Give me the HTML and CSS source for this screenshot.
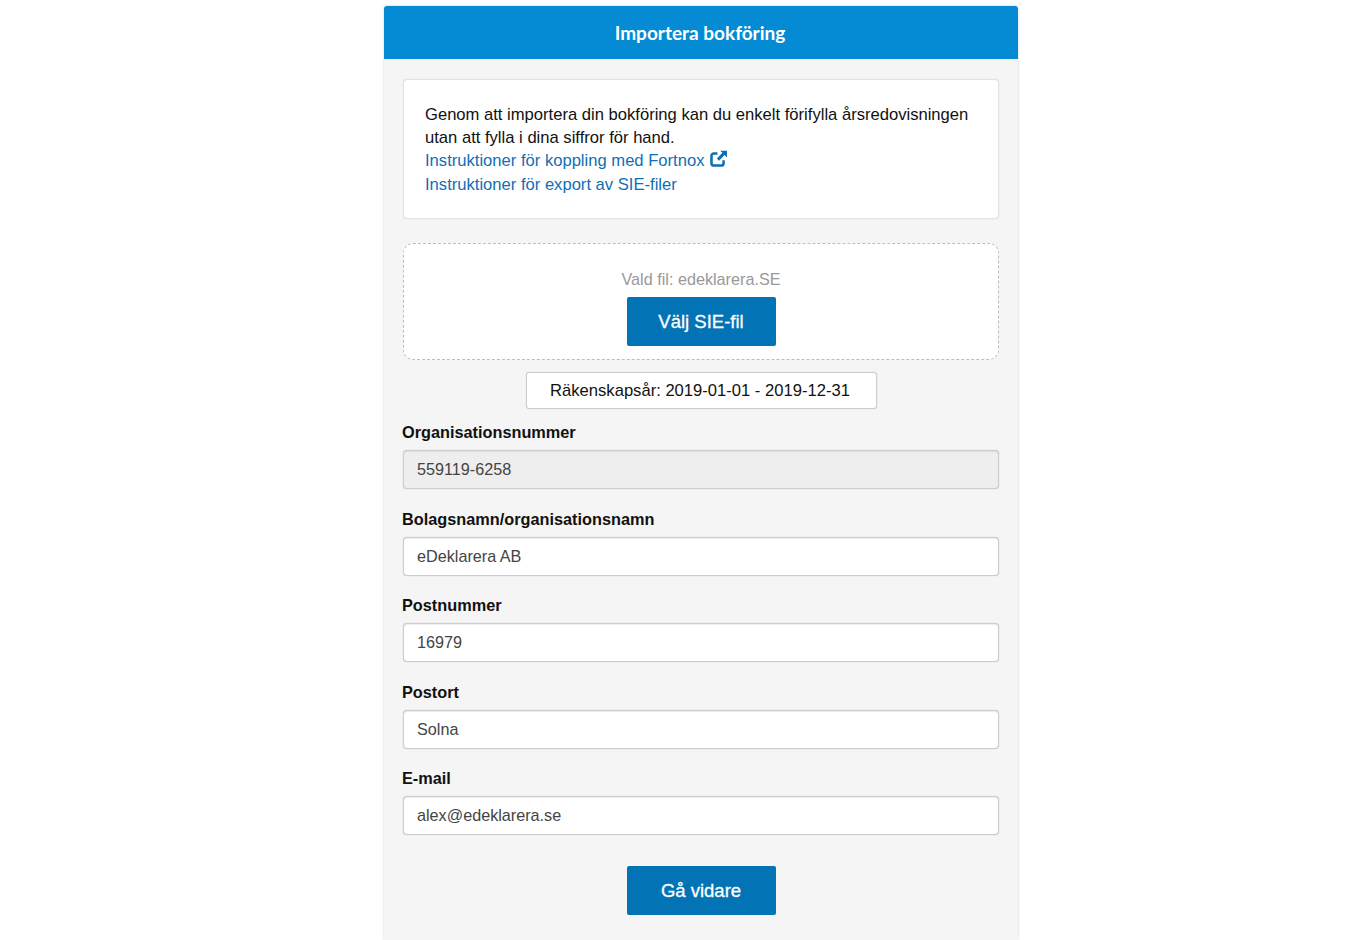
FILE: index.html
```html
<!DOCTYPE html>
<html lang="sv">
<head>
    <meta charset="UTF-8">
    <title>Importera bokföring</title>
    <link rel="stylesheet" href="styles.css">
</head>
<body>

<div id="panel">
    <div id="panel-title">Importera bokföring</div>

    <div id="panel-content">
        <div class="info-box">
            <div>Genom att importera din bokföring kan du enkelt förifylla årsredovisningen utan att fylla i dina siffror för hand.</div>
            <div>
                <a href="#">Instruktioner för koppling med Fortnox</a>
                <svg class="icon-external" viewBox="0 0 16 16" width="17" height="17">
                    <path d="M7 3.2H3.6A2.2 2.2 0 0 0 1.4 5.4v7A2.2 2.2 0 0 0 3.6 14.6h7a2.2 2.2 0 0 0 2.2-2.2V9.6" fill="none" stroke="#0f6fb5" stroke-width="2.4"/>
                    <path d="M9.6 .6H16v6.4l-2.3-2.3-5.2 5.3-2-2 5.2-5.3z" fill="#0f6fb5"/>
                </svg>
            </div>
            <div><a href="#">Instruktioner för export av SIE-filer</a></div>
        </div>

        <div class="drop-box">
            <div class="file-name">Vald fil: edeklarera.SE</div>
            <div class="btn">Välj SIE-fil</div>
        </div>

        <div class="year-row">
            <div class="year-box">Räkenskapsår: 2019-01-01 - 2019-12-31</div>
        </div>

        <div class="form-group">
            <label class="form-key">Organisationsnummer</label>
            <input class="form-input" type="text" value="559119-6258" disabled>
        </div>
        <div class="form-group">
            <label class="form-key">Bolagsnamn/organisationsnamn</label>
            <input class="form-input" type="text" value="eDeklarera AB">
        </div>
        <div class="form-group">
            <label class="form-key">Postnummer</label>
            <input class="form-input" type="text" value="16979">
        </div>
        <div class="form-group">
            <label class="form-key">Postort</label>
            <input class="form-input" type="text" value="Solna">
        </div>
        <div class="form-group">
            <label class="form-key">E-mail</label>
            <input class="form-input" type="text" value="alex@edeklarera.se">
        </div>

        <div class="btn btn-next">Gå vidare</div>
    </div>
</div>

</body>
</html>
```

FILE: styles.css
```css
html, body {
    height: 100%;
}

body {
    margin: 0;
    padding: 6px 0 0 384px;
    box-sizing: border-box;
    background-color: white;
    overflow: hidden;
    font-family: "Liberation Sans", Arial, sans-serif;
    font-size: 16.6px;
    color: #111;
}

#panel {
    width: 634px;
    height: 934px;
    background-color: #f5f5f5;
    box-shadow: 0 0 3px rgba(0, 0, 0, 0.18);
    border-radius: 3px 3px 0 0;
}

#panel-title {
    height: 53px;
    line-height: 54px;
    padding-right: 2px;
    box-sizing: border-box;
    text-align: center;
    font-family: Lato, sans-serif;
    font-weight: 700;
    font-size: 19px;
    color: white;
    background-color: #058ad4;
    border-radius: 3px 3px 0 0;
}

#panel-content {
    padding: 20px 19px 0 19px;
}

.info-box {
    height: 140px;
    box-sizing: border-box;
    padding: 22.5px 21px;
    line-height: 23.4px;
    background-color: white;
    border: 1px solid #e2e2e2;
    border-radius: 4px;
    box-shadow: 0 0 1px rgba(0, 0, 0, 0.12);
}

.info-box a {
    color: #0f6fb5;
    text-decoration: none;
}

.icon-external {
    vertical-align: -1px;
    margin-left: 1px;
}

.drop-box {
    height: 117px;
    box-sizing: border-box;
    margin-top: 24px;
    padding-top: 24px;
    text-align: center;
    font-size: 16.2px;
    background-color: white;
    border: 1px dashed #bdbdbd;
    border-radius: 10px;
}

.file-name {
    height: 29px;
    line-height: 23px;
    color: #999;
}

.btn {
    width: 149px;
    height: 49px;
    line-height: 49px;
    margin: 0 auto;
    text-align: center;
    font-size: 18.5px;
    color: white;
    background-color: #0274b6;
    border-radius: 2px;
    -webkit-text-stroke: 0.3px white;
}

.year-row {
    display: flex;
    justify-content: center;
    margin-top: 12px;
}

.year-box {
    width: 351px;
    height: 37px;
    box-sizing: border-box;
    padding-right: 2px;
    line-height: 35px;
    text-align: center;
    background-color: white;
    border: 1px solid #ccc;
    border-radius: 3px;
    box-shadow: 0 0 1px rgba(0, 0, 0, 0.2);
}

.form-group {
    margin-top: 12px;
    height: 74.6px;
}

.form-key {
    display: block;
    height: 29px;
    line-height: 23px;
    margin-left: -1px;
    font-size: 16.3px;
    font-weight: 700;
    color: #111;
}

.form-input {
    display: block;
    width: 100%;
    height: 39px;
    box-sizing: border-box;
    padding: 0 13px;
    font-family: "Liberation Sans", Arial, sans-serif;
    font-size: 16.2px;
    color: #444;
    background-color: white;
    border: 1px solid #ccc;
    border-radius: 4px;
    box-shadow: inset 0 1px 1px rgba(0, 0, 0, 0.07), 0 0 1px rgba(0, 0, 0, 0.25);
}

.form-input:disabled {
    background-color: #eee;
    color: #444;
}

.btn-next {
    margin-top: 24px;
}
```
